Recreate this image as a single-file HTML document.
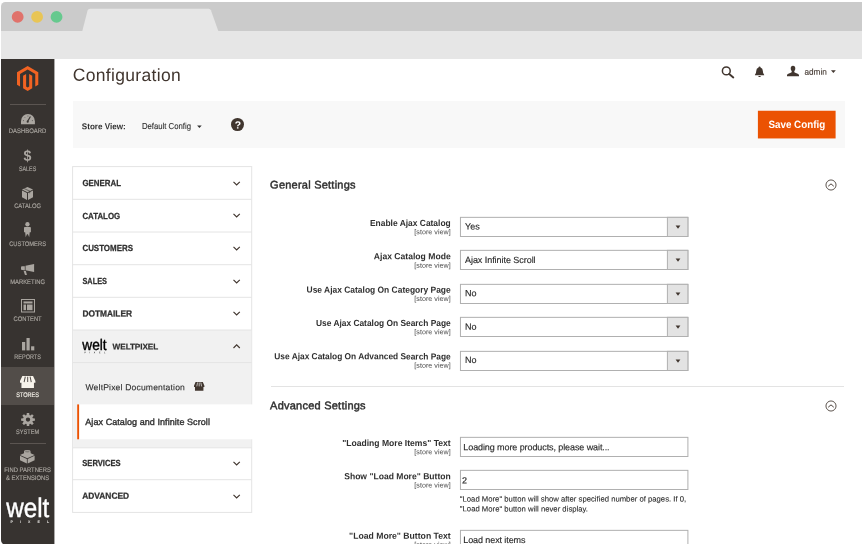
<!DOCTYPE html><html lang="en"><head><meta charset="utf-8"><title>Configuration</title><style>
*{box-sizing:border-box;margin:0;padding:0}
html,body{width:862px;height:544px;overflow:hidden;background:#fff}
body{position:relative;font-family:"Liberation Sans",sans-serif;color:#303030}
.t{position:absolute;white-space:pre;line-height:1;transform:rotate(.03deg)}
.abs{position:absolute}
.app{position:absolute;left:0;top:0;width:862px;height:544px;overflow:hidden;will-change:transform}
svg{position:absolute;overflow:visible}
.win{position:absolute;left:1px;top:1.5px;width:880px;height:560px;border-radius:4.3px;overflow:hidden;background:#fff}
.titlebar{position:absolute;left:0;top:0;width:100%;height:29px;background:#cbcbcb}
.toolbar{position:absolute;left:0;top:29px;width:100%;height:28.2px;background:#e6e6e6}
</style></head><body><div class="app"><div class="win"><div class="titlebar"></div><div class="toolbar"></div><svg style="left:0;top:0" width="240" height="30" viewBox="1 1.5 240 30"><path d="M82.3 30.6 L87.6 10 Q88.1 8.3 90 8.3 L208.6 8.3 Q210.3 8.3 210.9 9.8 L218.3 30.6 Z" fill="#e6e6e6"/></svg><svg style="left:0;top:0" width="70" height="30" viewBox="1 1.5 70 30"><circle cx="17.65" cy="16.4" r="5.9" fill="#e0726b"/><circle cx="37.1" cy="16.4" r="5.9" fill="#e8c556"/><circle cx="56.55" cy="16.4" r="5.9" fill="#66c98e"/></svg></div><div class="abs" style="left:1px;top:58.7px;width:53.3px;height:486.3px;background:#373330;border-bottom-left-radius:5px"></div><svg style="left:16.9px;top:66px" width="21.3" height="25" viewBox="1.609 0 20.782 24" preserveAspectRatio="none"><path fill="#f26322" d="M12 24l-4.455-2.572v-12l2.97-1.715v12.001l1.485.902 1.485-.902V7.713l2.97 1.715v12L12 24zM22.391 6v12l-2.969 1.714V7.713L12 3.43 4.574 7.713v12.001L1.609 18V6L12 0l10.391 6z"/></svg><div style="position:absolute;left:54.00px;top:58.70px;width:1.00px;height:486.30px;background:#373330;opacity:.42"></div><div style="position:absolute;left:9.50px;top:104.10px;width:36.40px;height:0.80px;background:#5b5551"></div><div style="position:absolute;left:1.00px;top:367.40px;width:53.20px;height:37.50px;background:#524d49"></div><div style="position:absolute;left:9.50px;top:443.00px;width:36.40px;height:0.80px;background:#5b5551"></div><span class="t" style="left:8px;top:128px;font-size:6.6px;color:#aaa6a0;transform-origin:0 0;transform:translate(0.85px,0.20px) rotate(.03deg) scaleX(0.8975);-webkit-text-stroke:0.14px #aaa6a0;">DASHBOARD</span><span class="t" style="left:19px;top:166px;font-size:6.6px;color:#aaa6a0;transform-origin:0 0;transform:translate(0.00px,0.00px) rotate(.03deg) scaleX(0.8088);-webkit-text-stroke:0.14px #aaa6a0;">SALES</span><span class="t" style="left:14px;top:203px;font-size:6.6px;color:#aaa6a0;transform-origin:0 0;transform:translate(0.15px,0.20px) rotate(.03deg) scaleX(0.8811);-webkit-text-stroke:0.14px #aaa6a0;">CATALOG</span><span class="t" style="left:9px;top:241px;font-size:6.6px;color:#aaa6a0;transform-origin:0 0;transform:translate(0.20px,0.00px) rotate(.03deg) scaleX(0.8759);-webkit-text-stroke:0.14px #aaa6a0;">CUSTOMERS</span><span class="t" style="left:10px;top:278px;font-size:6.6px;color:#aaa6a0;transform-origin:0 0;transform:translate(0.15px,0.50px) rotate(.03deg) scaleX(0.8902);-webkit-text-stroke:0.14px #aaa6a0;">MARKETING</span><span class="t" style="left:13px;top:316px;font-size:6.6px;color:#aaa6a0;transform-origin:0 0;transform:translate(0.55px,0.30px) rotate(.03deg) scaleX(0.8816);-webkit-text-stroke:0.14px #aaa6a0;">CONTENT</span><span class="t" style="left:14px;top:353px;font-size:6.6px;color:#aaa6a0;transform-origin:0 0;transform:translate(0.35px,0.80px) rotate(.03deg) scaleX(0.8342);-webkit-text-stroke:0.14px #aaa6a0;">REPORTS</span><span class="t" style="left:16px;top:391px;font-size:6.6px;color:#f7f3eb;transform-origin:0 0;transform:translate(0.20px,0.80px) rotate(.03deg) scaleX(0.8444);-webkit-text-stroke:0.14px #f7f3eb;">STORES</span><span class="t" style="left:16px;top:429px;font-size:6.6px;color:#aaa6a0;transform-origin:0 0;transform:translate(0.05px,0.00px) rotate(.03deg) scaleX(0.8516);-webkit-text-stroke:0.14px #aaa6a0;">SYSTEM</span><span class="t" style="left:4px;top:467px;font-size:6.6px;color:#aaa6a0;transform-origin:0 0;transform:translate(0.30px,0.00px) rotate(.03deg) scaleX(0.8874);-webkit-text-stroke:0.14px #aaa6a0;">FIND PARTNERS</span><span class="t" style="left:6px;top:475px;font-size:6.6px;color:#aaa6a0;transform-origin:0 0;transform:translate(0.10px,0.00px) rotate(.03deg) scaleX(0.8823);-webkit-text-stroke:0.14px #aaa6a0;">&amp; EXTENSIONS</span><svg style="left:20.6px;top:113.8px" width="13.90" height="10.20" viewBox="0 0 28 20" preserveAspectRatio="none" fill="#aaa6a0"><path d="M0 20 V14 A14 14 0 0 1 28 14 V20 Z"/><path d="M13 15 L19 5" stroke="#373330" stroke-width="2.2" fill="none"/><circle cx="13.5" cy="15" r="2.2" fill="#373330"/><path d="M4 13h2M22 13h2M14 3v2M7 6l1.2 1.2" stroke="#373330" stroke-width="1.2"/></svg><span class="t" style="left:23px;top:147px;font-size:15.6px;font-weight:700;color:#aaa6a0;transform-origin:0 0;transform:translate(0.40px,0.60px) rotate(.03deg) scaleX(0.9094);">$</span><svg style="left:22px;top:186.8px" width="11.00" height="12.90" viewBox="0 0 22 26" preserveAspectRatio="none" fill="#aaa6a0"><path d="M11 0 L22 5 L11 10.5 L0 5 Z"/><path d="M0 7 L10 12 V26 L0 20.5 Z"/><path d="M22 7 L12 12 V26 L22 20.5 Z"/><path d="M5.2 2.4 L16.5 7.8 V12 L14.2 13 V9 L3 3.6Z" fill="#373330" opacity=".55"/></svg><svg style="left:24.3px;top:222px" width="6.90" height="15.20" viewBox="0 0 14 30" preserveAspectRatio="none" fill="#aaa6a0"><circle cx="7" cy="4.6" r="4.4"/><path d="M1.5 10 H12.5 Q14 10 14 12 V20 H11.6 L10.6 30 L8 24 H6 L3.4 30 L2.4 20 H0 V12 Q0 10 1.5 10Z"/></svg><svg style="left:21px;top:263.7px" width="13.10" height="11.00" viewBox="0 0 26 22" preserveAspectRatio="none" fill="#aaa6a0"><path d="M26 0 V16 L9 12.5 V3.5 Z"/><path d="M2 4.5 H7.6 V11.8 H2 Q0 11.8 0 10 V6.3 Q0 4.5 2 4.5Z"/><path d="M5 13.2 L9.6 14.2 L11.6 21 Q11.7 22 10.7 22 H8.6 Q7.8 22 7.5 21.2Z"/></svg><svg style="left:20.6px;top:299px" width="14.00" height="13.60" viewBox="0 0 28 28" preserveAspectRatio="none" fill="#aaa6a0"><path d="M0 0H28V28H0Z M2 2V26H26V2Z" fill-rule="evenodd"/><rect x="5" y="5" width="18" height="4.2"/><rect x="5" y="11.4" width="5" height="11.6"/><rect x="12" y="11.4" width="11" height="11.6"/></svg><svg style="left:21.8px;top:337.6px" width="12.30" height="12.40" viewBox="0 0 24.6 24.8" preserveAspectRatio="none" fill="#aaa6a0"><rect x="0" y="8" width="6.4" height="16.8"/><rect x="9" y="0" width="6.4" height="24.8"/><rect x="18.2" y="16.6" width="6.4" height="8.2"/></svg><svg style="left:19.9px;top:376.1px" width="15.40" height="12.10" viewBox="0 0 31 24" preserveAspectRatio="none" fill="#f7f3eb"><path d="M4.7 0H26.3L31 10V13.4H28.1V24H2.9V13.4H0V10Z"/><path d="M10.7 1.3L8.3 12M15.5 1.3V12M20.3 1.3L22.7 12" stroke="#524d49" stroke-width="2" fill="none"/></svg><svg style="left:20.6px;top:413px" width="14.00" height="13.20" viewBox="0 0 28 28" preserveAspectRatio="none" fill="#aaa6a0"><path fill-rule="evenodd" d="M27.79 11.59 L27.79 16.41 L23.60 16.79 L22.76 18.82 L25.45 22.05 L22.05 25.45 L18.82 22.76 L16.79 23.60 L16.41 27.79 L11.59 27.79 L11.21 23.60 L9.18 22.76 L5.95 25.45 L2.55 22.05 L5.24 18.82 L4.40 16.79 L0.21 16.41 L0.21 11.59 L4.40 11.21 L5.24 9.18 L2.55 5.95 L5.95 2.55 L9.18 5.24 L11.21 4.40 L11.59 0.21 L16.41 0.21 L16.79 4.40 L18.82 5.24 L22.05 2.55 L25.45 5.95 L22.76 9.18 L23.60 11.21Z M18.40 14.00 A4.4 4.4 0 1 0 9.60 14.00 A4.4 4.4 0 1 0 18.40 14.00Z"/></svg><svg style="left:20.4px;top:450px" width="14.60" height="13.40" viewBox="0 0 29 27" preserveAspectRatio="none" fill="#aaa6a0"><path d="M14.5 3.6 L29 10 L14.5 16.6 L0 10 Z"/><path d="M0 11.6 L13.7 17.9 V27 L0 20.6 Z"/><path d="M29 11.6 L15.3 17.9 V27 L29 20.6 Z"/><ellipse cx="14.5" cy="6.4" rx="6.4" ry="3"/><path d="M8.1 3.2 A6.4 3 0 0 1 20.9 3.2 V6.4 H8.1Z"/><ellipse cx="14.5" cy="3.2" rx="4.6" ry="1.9" fill="#373330" opacity=".35"/></svg><span class="t" style="left:6px;top:495px;font-size:27px;color:#ffffff;transform-origin:0 0;transform:translate(0.30px,0.20px) rotate(.03deg) scaleX(0.8955);-webkit-text-stroke:0.4px #ffffff;">welt</span><span class="t" style="left:10px;top:521px;font-size:3.6px;font-weight:700;color:#e8e6e3;letter-spacing:7.052px;transform:translate(0.60px,0.10px) rotate(.03deg);font-family:"Liberation Serif",serif;">PIXEL</span><span class="t" style="left:72px;top:66px;font-size:17.5px;color:#41362f;letter-spacing:0.324px;transform:translate(0.70px,0.90px) rotate(.03deg);">Configuration</span><svg style="left:720px;top:65px" width="16" height="14" viewBox="720 65 16 14"><circle cx="726.3" cy="70.9" r="3.9" fill="none" stroke="#41362f" stroke-width="1.5"/><path d="M729.2 74 L733.3 77.4" stroke="#41362f" stroke-width="1.9" stroke-linecap="round"/></svg><svg style="left:754px;top:66px" width="12" height="12" viewBox="754 66 12 12" fill="#41362f"><path d="M759.55 66.6 q1 0 1 .9 q2.3 .8 2.3 3.6 q0 2.4 1.3 3.6 v.6 h-9.2 v-.6 q1.3-1.2 1.3-3.6 q0-2.8 2.3-3.6 q0-.9 1-.9Z"/><path d="M758.3 75.9 h2.5 q-.2 1.2-1.25 1.2 q-1.05 0-1.25-1.2Z"/></svg><svg style="left:786px;top:65px" width="14" height="12" viewBox="786 65 14 12" fill="#41362f"><path d="M793 65.8 q2.3 0 2.3 2.6 q0 1.7-1 2.6 v1 q0 .6 1.6 1 q3.1.8 3.1 2 v1.2 h-12 v-1.2 q0-1.2 3.1-2 q1.6-.4 1.6-1 v-1 q-1-.9-1-2.6 q0-2.6 2.3-2.6Z"/></svg><span class="t" style="left:804px;top:67px;font-size:8.6px;color:#41362f;transform-origin:0 0;transform:translate(0.40px,0.70px) rotate(.03deg) scaleX(0.9570);-webkit-text-stroke:0.12px #41362f;">admin</span><svg style="left:831px;top:70px" width="6" height="4" viewBox="0 0 6 4"><path d="M0 .3 H4.8 L2.4 3.1Z" fill="#41362f"/></svg><div style="position:absolute;left:72.50px;top:101.20px;width:772.00px;height:47.20px;background:#f8f8f8"></div><span class="t" style="left:81px;top:122px;font-size:8.6px;font-weight:700;transform-origin:0 0;transform:translate(0.80px,0.30px) rotate(.03deg) scaleX(0.9409);">Store View:</span><span class="t" style="left:141px;top:122px;font-size:8.6px;transform-origin:0 0;transform:translate(0.90px,0.30px) rotate(.03deg) scaleX(0.9014);-webkit-text-stroke:0.12px #303030;">Default Config</span><svg style="left:197px;top:125px" width="6" height="4" viewBox="0 0 6 4"><path d="M.1 .5 H4.7 L2.4 3.1Z" fill="#303030"/></svg><div style="position:absolute;left:231.20px;top:118.40px;width:12.80px;height:12.80px;background:#41362f;border-radius:50%"></div><span class="t" style="left:234px;top:120px;font-size:10.4px;font-weight:700;color:#ffffff;transform:translate(0.70px,0.60px) rotate(.03deg);">?</span><svg style="left:756px;top:109px" width="82" height="32" viewBox="756 109 82 32"><rect x="757.9" y="110.75" width="77.7" height="27.7" fill="#eb5202"/></svg><span class="t" style="left:768px;top:119px;font-size:10.6px;font-weight:700;color:#ffffff;transform-origin:0 0;transform:translate(0.40px,0.10px) rotate(.03deg) scaleX(0.9276);">Save Config</span><svg style="left:70px;top:164px" width="186" height="352" viewBox="70 164 186 352"><rect x="72.6" y="166.6" width="179.1" height="345.8" fill="#fff" stroke="#e4e4e4" stroke-width="1"/><rect x="73.1" y="330" width="178.1" height="117.8" fill="#f1f1f1"/><path d="M72.6 199.3 H251.7" stroke="#e4e4e4" stroke-width="1"/><path d="M72.6 232.0 H251.7" stroke="#e4e4e4" stroke-width="1"/><path d="M72.6 264.7 H251.7" stroke="#e4e4e4" stroke-width="1"/><path d="M72.6 297.3 H251.7" stroke="#e4e4e4" stroke-width="1"/><path d="M72.6 330.0 H251.7" stroke="#e4e4e4" stroke-width="1"/><path d="M72.6 362.6 H251.7" stroke="#e4e4e4" stroke-width="1"/><path d="M72.6 447.8 H251.7" stroke="#e4e4e4" stroke-width="1"/><path d="M72.6 479.7 H251.7" stroke="#e4e4e4" stroke-width="1"/><rect x="77.3" y="404.4" width="176" height="34.9" fill="#fff"/><rect x="77.2" y="404.4" width="1.9" height="34.9" fill="#eb5202"/></svg><span class="t" style="left:82px;top:178px;font-size:8.9px;font-weight:700;transform-origin:0 0;transform:translate(0.40px,0.95px) rotate(.03deg) scaleX(0.8893);-webkit-text-stroke:0.25px #303030;">GENERAL</span><svg style="left:232.6px;top:180.55px" width="7.3" height="4.8" viewBox="0 0 7.3 4.8"><path d="M.5 .8 L3.65 4.0 L6.8 .8" fill="none" stroke="#41362f" stroke-width="1.15"/></svg><span class="t" style="left:82px;top:211px;font-size:8.9px;font-weight:700;transform-origin:0 0;transform:translate(0.40px,0.65px) rotate(.03deg) scaleX(0.8881);-webkit-text-stroke:0.25px #303030;">CATALOG</span><svg style="left:232.6px;top:213.25px" width="7.3" height="4.8" viewBox="0 0 7.3 4.8"><path d="M.5 .8 L3.65 4.0 L6.8 .8" fill="none" stroke="#41362f" stroke-width="1.15"/></svg><span class="t" style="left:82px;top:244px;font-size:8.9px;font-weight:700;transform-origin:0 0;transform:translate(0.40px,0.25px) rotate(.03deg) scaleX(0.8948);-webkit-text-stroke:0.25px #303030;">CUSTOMERS</span><svg style="left:232.6px;top:245.85px" width="7.3" height="4.8" viewBox="0 0 7.3 4.8"><path d="M.5 .8 L3.65 4.0 L6.8 .8" fill="none" stroke="#41362f" stroke-width="1.15"/></svg><span class="t" style="left:82px;top:276px;font-size:8.9px;font-weight:700;transform-origin:0 0;transform:translate(0.40px,0.95px) rotate(.03deg) scaleX(0.8313);-webkit-text-stroke:0.25px #303030;">SALES</span><svg style="left:232.6px;top:278.54999999999995px" width="7.3" height="4.8" viewBox="0 0 7.3 4.8"><path d="M.5 .8 L3.65 4.0 L6.8 .8" fill="none" stroke="#41362f" stroke-width="1.15"/></svg><span class="t" style="left:82px;top:309px;font-size:8.9px;font-weight:700;transform-origin:0 0;transform:translate(0.40px,0.45px) rotate(.03deg) scaleX(0.9419);-webkit-text-stroke:0.25px #303030;">DOTMAILER</span><svg style="left:232.6px;top:311.04999999999995px" width="7.3" height="4.8" viewBox="0 0 7.3 4.8"><path d="M.5 .8 L3.65 4.0 L6.8 .8" fill="none" stroke="#41362f" stroke-width="1.15"/></svg><span class="t" style="left:82px;top:459px;font-size:8.9px;font-weight:700;transform-origin:0 0;transform:translate(0.30px,0.40px) rotate(.03deg) scaleX(0.8562);-webkit-text-stroke:0.25px #303030;">SERVICES</span><svg style="left:232.7px;top:461.3px" width="7.3" height="4.8" viewBox="0 0 7.3 4.8"><path d="M.5 .8 L3.65 4.0 L6.8 .8" fill="none" stroke="#41362f" stroke-width="1.15"/></svg><span class="t" style="left:82px;top:491px;font-size:8.9px;font-weight:700;transform-origin:0 0;transform:translate(0.20px,0.80px) rotate(.03deg) scaleX(0.9448);-webkit-text-stroke:0.25px #303030;">ADVANCED</span><svg style="left:232.7px;top:493.8px" width="7.3" height="4.8" viewBox="0 0 7.3 4.8"><path d="M.5 .8 L3.65 4.0 L6.8 .8" fill="none" stroke="#41362f" stroke-width="1.15"/></svg><span class="t" style="left:82px;top:337px;font-size:15.4px;color:#000000;transform-origin:0 0;transform:translate(0.30px,0.20px) rotate(.03deg) scaleX(0.8877);-webkit-text-stroke:0.4px #000000;">welt</span><span class="t" style="left:84px;top:351px;font-size:2.2px;font-weight:700;color:#333;letter-spacing:3.668px;transform:translate(0.40px,0.20px) rotate(.03deg);font-family:"Liberation Serif",serif;">PIXEL</span><span class="t" style="left:112px;top:343px;font-size:8.2px;font-weight:700;letter-spacing:-0.081px;transform:translate(0.60px,0.40px) rotate(.03deg);-webkit-text-stroke:0.2px #303030;">WELTPIXEL</span><svg style="left:232.7px;top:343.5px" width="7.3" height="4.8" viewBox="0 0 7.3 4.8"><path d="M.5 4.0 L3.65 .8 L6.8 4.0" fill="none" stroke="#41362f" stroke-width="1.15"/></svg><span class="t" style="left:85px;top:383px;font-size:8.6px;letter-spacing:0.161px;transform:translate(0.50px,0.20px) rotate(.03deg);-webkit-text-stroke:0.12px #303030;">WeltPixel Documentation</span><svg style="left:193.6px;top:382.1px" width="10.40" height="8.80" viewBox="0 0 31 24" preserveAspectRatio="none" fill="#41362f"><path d="M4.7 0H26.3L31 10V13.4H28.1V24H2.9V13.4H0V10Z"/><path d="M10.7 1.3L8.3 12M15.5 1.3V12M20.3 1.3L22.7 12" stroke="#f1f1f1" stroke-width="2" fill="none"/></svg><span class="t" style="left:85px;top:418px;font-size:9.0px;letter-spacing:0.065px;transform:translate(0.30px,0.00px) rotate(.03deg);-webkit-text-stroke:0.36px #303030;">Ajax Catalog and Infinite Scroll</span><span class="t" style="left:270px;top:179px;font-size:11.0px;letter-spacing:0.231px;transform:translate(0.10px,0.50px) rotate(.03deg);-webkit-text-stroke:0.45px #303030;">General Settings</span><span class="t" style="left:270px;top:400px;font-size:11.0px;letter-spacing:0.235px;transform:translate(0.10px,0.20px) rotate(.03deg);-webkit-text-stroke:0.45px #303030;">Advanced Settings</span><div style="position:absolute;left:270.70px;top:385.80px;width:573.80px;height:1.00px;background:#e3e3e3"></div><svg style="left:824px;top:178.45px" width="14" height="14" viewBox="-7 -7 14 14"><circle r="5.05" fill="none" stroke="#41362f" stroke-width="0.85"/><path d="M-2.8 1.25 L0 -1.15 L2.8 1.25" fill="none" stroke="#41362f" stroke-width="0.95"/></svg><svg style="left:824px;top:398.75px" width="14" height="14" viewBox="-7 -7 14 14"><circle r="5.05" fill="none" stroke="#41362f" stroke-width="0.85"/><path d="M-2.8 1.25 L0 -1.15 L2.8 1.25" fill="none" stroke="#41362f" stroke-width="0.95"/></svg><svg style="left:455px;top:214.10px" width="240" height="26" viewBox="455 214.10 240 26"><rect x="460.45" y="217.45" width="227.45" height="19.15" fill="#fff" stroke="#b0b0b0" stroke-width="1"/><rect x="667.4" y="217.45" width="20.50" height="19.15" fill="#e3e3e3" stroke="#b0b0b0" stroke-width="1"/><path d="M675.6 225.70 H680.4 L678 228.80Z" fill="#41362f"/></svg><span class="t" style="left:365px;top:219px;font-size:8.9px;font-weight:700;transform-origin:100% 0;transform:translate(0.70px,0.00px) rotate(.03deg) scaleX(0.9494);">Enable Ajax Catalog</span><span class="t" style="left:414px;top:229px;font-size:7.1px;color:#484848;letter-spacing:0.048px;transform:translate(0.30px,0.30px) rotate(.03deg);">[store view]</span><span class="t" style="left:465px;top:222px;font-size:9.0px;color:#2a2a2a;transform:translate(0.00px,0.60px) rotate(.03deg);-webkit-text-stroke:0.15px #2a2a2a;">Yes</span><svg style="left:455px;top:247.45px" width="240" height="26" viewBox="455 247.45 240 26"><rect x="460.45" y="250.80" width="227.45" height="19.15" fill="#fff" stroke="#b0b0b0" stroke-width="1"/><rect x="667.4" y="250.80" width="20.50" height="19.15" fill="#e3e3e3" stroke="#b0b0b0" stroke-width="1"/><path d="M675.6 259.05 H680.4 L678 262.15Z" fill="#41362f"/></svg><span class="t" style="left:371px;top:252px;font-size:8.9px;font-weight:700;transform-origin:100% 0;transform:translate(0.29px,0.35px) rotate(.03deg) scaleX(0.9684);">Ajax Catalog Mode</span><span class="t" style="left:414px;top:262px;font-size:7.1px;color:#484848;letter-spacing:0.048px;transform:translate(0.30px,0.65px) rotate(.03deg);">[store view]</span><span class="t" style="left:465px;top:255px;font-size:9.0px;color:#2a2a2a;letter-spacing:-0.049px;transform:translate(0.00px,0.95px) rotate(.03deg);-webkit-text-stroke:0.15px #2a2a2a;">Ajax Infinite Scroll</span><svg style="left:455px;top:280.80px" width="240" height="26" viewBox="455 280.80 240 26"><rect x="460.45" y="284.15" width="227.45" height="19.15" fill="#fff" stroke="#b0b0b0" stroke-width="1"/><rect x="667.4" y="284.15" width="20.50" height="19.15" fill="#e3e3e3" stroke="#b0b0b0" stroke-width="1"/><path d="M675.6 292.40 H680.4 L678 295.50Z" fill="#41362f"/></svg><span class="t" style="left:299px;top:285px;font-size:8.9px;font-weight:700;transform-origin:100% 0;transform:translate(0.12px,0.70px) rotate(.03deg) scaleX(0.9507);">Use Ajax Catalog On Category Page</span><span class="t" style="left:414px;top:296px;font-size:7.1px;color:#484848;letter-spacing:0.048px;transform:translate(0.30px,0.00px) rotate(.03deg);">[store view]</span><span class="t" style="left:465px;top:289px;font-size:9.0px;color:#2a2a2a;transform:translate(0.00px,0.30px) rotate(.03deg);-webkit-text-stroke:0.15px #2a2a2a;">No</span><svg style="left:455px;top:314.15px" width="240" height="26" viewBox="455 314.15 240 26"><rect x="460.45" y="317.50" width="227.45" height="19.15" fill="#fff" stroke="#b0b0b0" stroke-width="1"/><rect x="667.4" y="317.50" width="20.50" height="19.15" fill="#e3e3e3" stroke="#b0b0b0" stroke-width="1"/><path d="M675.6 325.75 H680.4 L678 328.85Z" fill="#41362f"/></svg><span class="t" style="left:307px;top:319px;font-size:8.9px;font-weight:700;transform-origin:100% 0;transform:translate(0.98px,0.05px) rotate(.03deg) scaleX(0.9438);">Use Ajax Catalog On Search Page</span><span class="t" style="left:414px;top:329px;font-size:7.1px;color:#484848;letter-spacing:0.048px;transform:translate(0.30px,0.35px) rotate(.03deg);">[store view]</span><span class="t" style="left:465px;top:322px;font-size:9.0px;color:#2a2a2a;transform:translate(0.00px,0.65px) rotate(.03deg);-webkit-text-stroke:0.15px #2a2a2a;">No</span><svg style="left:455px;top:347.50px" width="240" height="26" viewBox="455 347.50 240 26"><rect x="460.45" y="350.85" width="227.45" height="19.15" fill="#fff" stroke="#b0b0b0" stroke-width="1"/><rect x="667.4" y="350.85" width="20.50" height="19.15" fill="#e3e3e3" stroke="#b0b0b0" stroke-width="1"/><path d="M675.6 359.10 H680.4 L678 362.20Z" fill="#41362f"/></svg><span class="t" style="left:263px;top:352px;font-size:8.9px;font-weight:700;transform-origin:100% 0;transform:translate(0.43px,0.40px) rotate(.03deg) scaleX(0.9420);">Use Ajax Catalog On Advanced Search Page</span><span class="t" style="left:414px;top:362px;font-size:7.1px;color:#484848;letter-spacing:0.048px;transform:translate(0.30px,0.70px) rotate(.03deg);">[store view]</span><span class="t" style="left:465px;top:356px;font-size:9.0px;color:#2a2a2a;transform:translate(0.00px,0.00px) rotate(.03deg);-webkit-text-stroke:0.15px #2a2a2a;">No</span><svg style="left:455px;top:434.10px" width="240" height="26" viewBox="455 434.10 240 26"><rect x="460.45" y="437.45" width="227.45" height="19.15" fill="#fff" stroke="#b0b0b0" stroke-width="1"/></svg><span class="t" style="left:338px;top:439px;font-size:8.9px;font-weight:700;transform-origin:100% 0;transform:translate(0.39px,0.00px) rotate(.03deg) scaleX(0.9661);">"Loading More Items" Text</span><span class="t" style="left:414px;top:449px;font-size:7.1px;color:#484848;letter-spacing:0.048px;transform:translate(0.30px,0.30px) rotate(.03deg);">[store view]</span><span class="t" style="left:463px;top:443px;font-size:9.0px;color:#2a2a2a;letter-spacing:-0.091px;transform:translate(0.30px,0.20px) rotate(.03deg);-webkit-text-stroke:0.15px #2a2a2a;">Loading more products, please wait...</span><svg style="left:455px;top:467.30px" width="240" height="26" viewBox="455 467.30 240 26"><rect x="460.45" y="470.65" width="227.45" height="19.15" fill="#fff" stroke="#b0b0b0" stroke-width="1"/></svg><span class="t" style="left:340px;top:472px;font-size:8.9px;font-weight:700;transform-origin:100% 0;transform:translate(0.23px,0.20px) rotate(.03deg) scaleX(0.9641);">Show "Load More" Button</span><span class="t" style="left:414px;top:482px;font-size:7.1px;color:#484848;letter-spacing:0.048px;transform:translate(0.30px,0.50px) rotate(.03deg);">[store view]</span><span class="t" style="left:461px;top:476px;font-size:9.0px;color:#2a2a2a;transform:translate(0.90px,0.40px) rotate(.03deg);-webkit-text-stroke:0.15px #2a2a2a;">2</span><svg style="left:455px;top:526.80px" width="240" height="26" viewBox="455 526.80 240 26"><rect x="460.45" y="530.15" width="227.45" height="19.15" fill="#fff" stroke="#b0b0b0" stroke-width="1"/></svg><span class="t" style="left:346px;top:531px;font-size:8.9px;font-weight:700;transform-origin:100% 0;transform:translate(0.31px,0.70px) rotate(.03deg) scaleX(0.9733);">"Load More" Button Text</span><span class="t" style="left:414px;top:542px;font-size:7.1px;color:#484848;letter-spacing:0.048px;transform:translate(0.30px,0.00px) rotate(.03deg);">[store view]</span><span class="t" style="left:463px;top:535px;font-size:9.0px;color:#2a2a2a;letter-spacing:-0.096px;transform:translate(0.30px,0.90px) rotate(.03deg);-webkit-text-stroke:0.15px #2a2a2a;">Load next items</span><span class="t" style="left:459px;top:495px;font-size:7.7px;color:#2a2a2a;letter-spacing:0.013px;transform:translate(0.80px,0.50px) rotate(.03deg);-webkit-text-stroke:0.1px #2a2a2a;">"Load More" button will show after specified number of pages. If 0,</span><span class="t" style="left:459px;top:505px;font-size:7.7px;color:#2a2a2a;letter-spacing:0.018px;transform:translate(0.80px,0.40px) rotate(.03deg);-webkit-text-stroke:0.1px #2a2a2a;">"Load More" button will never display.</span></div></body></html>
